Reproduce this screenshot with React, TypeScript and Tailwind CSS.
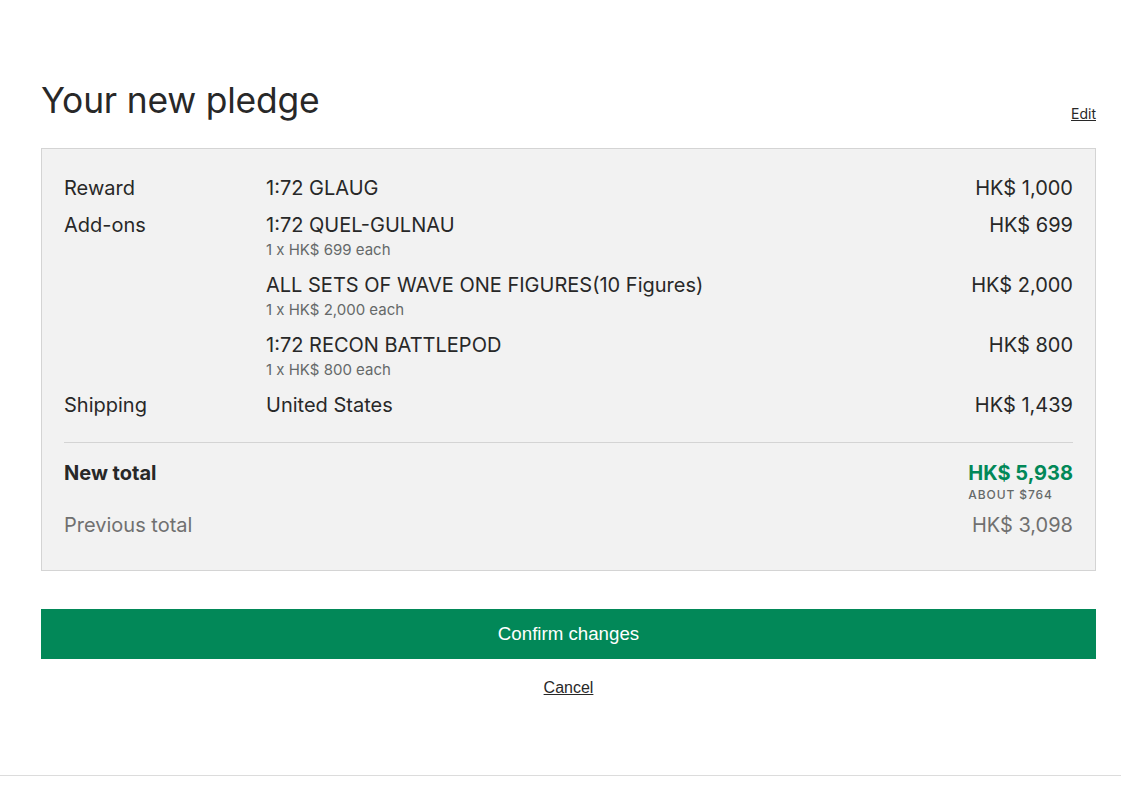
const rows = [
  { label: "Reward", items: [{ name: "1:72 GLAUG", price: "HK$ 1,000" }] },
  {
    label: "Add-ons",
    items: [
      { name: "1:72 QUEL-GULNAU", price: "HK$ 699", each: "1 x HK$ 699 each" },
      { name: "ALL SETS OF WAVE ONE FIGURES(10 Figures)", price: "HK$ 2,000", each: "1 x HK$ 2,000 each" },
      { name: "1:72 RECON BATTLEPOD", price: "HK$ 800", each: "1 x HK$ 800 each" },
    ],
  },
  { label: "Shipping", items: [{ name: "United States", price: "HK$ 1,439" }] },
];

export default function App() {
  return (
    <div className="min-h-[796px] bg-white text-[#282828] font-['Inter',sans-serif] flex flex-col">
      <div className="pl-[41px] pr-[25px] pt-[79px] w-[1137px] max-w-full box-border">
        <div className="flex items-end justify-between">
          <h1 className="text-[35.4px] leading-[44px] font-normal tracking-[-0.2px]">Your new pledge</h1>
          <a href="#" className="text-[14px] leading-[20px] underline mb-[-1px]">
            Edit
          </a>
        </div>

        <div className="mt-[25px] bg-[#f2f2f2] border border-[#d4d4d4] px-[22px] pt-[27px] pb-[33px]">
          <div className="flex flex-col gap-[13px]">
            {rows.map((row) =>
              row.items.map((it, i) => (
                <div key={row.label + i} className="flex text-[20px] leading-[24px]">
                  <div className="w-[202px] shrink-0">{i === 0 ? row.label : ""}</div>
                  <div className="flex-1">
                    <div>{it.name}</div>
                    {it.each && <div className="text-[15px] leading-[20px] mt-[3px] text-[#656969]">{it.each}</div>}
                  </div>
                  <div className="text-right">{it.price}</div>
                </div>
              ))
            )}
          </div>

          <div className="h-px bg-[#d4d4d4] mt-[25px]" />

          <div className="flex justify-between mt-[18px] text-[20px] leading-[24px]">
            <div className="font-bold">New total</div>
            <div className="flex flex-col items-end">
              <div className="font-bold text-[#028858]">HK$ 5,938</div>
              <div className="self-start text-[12px] leading-[14px] font-medium tracking-[0.9px] text-[#656969] mt-[3px]">
                ABOUT $764
              </div>
            </div>
          </div>

          <div className="flex justify-between mt-[11px] text-[20px] leading-[24px] text-[#707070]">
            <div>Previous total</div>
            <div>HK$ 3,098</div>
          </div>
        </div>

        <button className="mt-[38px] w-full h-[50px] bg-[#028858] text-white text-[18.7px] font-['Liberation_Sans',Arial,sans-serif]">
          Confirm changes
        </button>

        <div className="mt-[16px] text-center">
          <a href="#" className="underline text-[16px] leading-[20px] font-['Liberation_Sans',Arial,sans-serif]">
            Cancel
          </a>
        </div>
      </div>
      <div className="mt-[76px] h-px bg-[#dcdcdc] w-full" />
    </div>
  );
}
